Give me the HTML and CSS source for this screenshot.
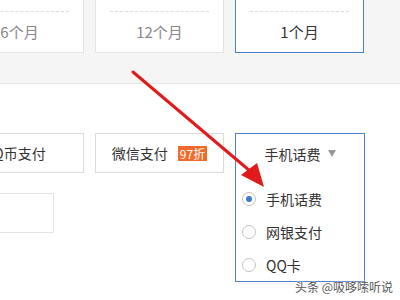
FILE: index.html
```html
<!DOCTYPE html>
<html lang="zh">
<head>
<meta charset="utf-8">
<link rel="stylesheet" href="styles.css">
</head>
<body>
<div class="page">
  <section class="plans">
    <div class="card"><div class="card-top"></div><div class="card-label">6个月</div></div>
    <div class="card"><div class="card-top"></div><div class="card-label">12个月</div></div>
    <div class="card selected"><div class="card-top"></div><div class="card-label">1个月</div></div>
  </section>
  <section class="pay">
    <div class="col-left">
      <div class="btn">Q币支付</div>
      <div class="input"></div>
    </div>
    <div class="btn wx">微信支付<span class="badge">97折</span></div>
    <div class="dropdown">
      <div class="dd-head">手机话费<span class="caret"></span></div>
      <ul class="dd-list">
        <li><span class="radio on"></span>手机话费</li>
        <li><span class="radio"></span>网银支付</li>
        <li><span class="radio"></span>QQ卡</li>
      </ul>
    </div>
  </section>
  <svg class="arrow" width="400" height="300" viewBox="0 0 400 300">
    <line x1="133" y1="72" x2="250" y2="171" stroke="#e11b1b" stroke-width="3" stroke-linecap="round"/>
    <polygon points="264,187 241,175 257,163" fill="#e11b1b"/>
  </svg>
  <div class="watermark">头条 @吸哆嗦听说</div>
</div>
</body>
</html>
```
FILE: styles.css
```css
html, body {
  margin: 0;
  padding: 0;
}
body {
  width: 400px;
  height: 300px;
  overflow: hidden;
  background: #fff;
  font-family: "Noto Sans CJK SC", "Microsoft YaHei", sans-serif;
  color: #333;
}
.page {
  position: relative;
  width: 400px;
  height: 300px;
  overflow: hidden;
}
.plans {
  height: 83px;
  background: #f5f5f5;
  border-bottom: 1px solid #e6e6e6;
  display: flex;
  align-items: flex-end;
  gap: 11px;
  margin-left: -45px;
  padding-bottom: 30px;
  box-sizing: border-box;
  height: 84px;
}
.card {
  flex: none;
  width: 129px;
  height: 93px;
  box-sizing: border-box;
  background: #fff;
  border: 1px solid #e4e4e4;
}
.card.selected {
  border-color: #4a7fcf;
}
.card-top {
  height: 50px;
  margin: 0 14px;
  border-bottom: 1px dashed #dcdcdc;
}
.card-label {
  height: 40px;
  line-height: 40px;
  text-align: center;
  font-size: 15px;
  color: #888;
}
.card.selected .card-label {
  color: #333;
}
.pay {
  display: flex;
  align-items: flex-start;
  gap: 11px;
  margin-left: -45px;
  padding-top: 49px;
}
.col-left {
  display: flex;
  flex-direction: column;
}
.btn {
  flex: none;
  width: 129px;
  height: 40px;
  box-sizing: border-box;
  border: 1px solid #dcdcdc;
  display: flex;
  align-items: center;
  justify-content: center;
  font-size: 14px;
  color: #333;
}
.wx {
  gap: 10px;
}
.badge {
  background: #f06a2a;
  color: #fff;
  font-size: 12px;
  height: 15px;
  line-height: 15px;
  padding: 0 2px;
}
.input {
  margin-top: 20px;
  width: 99px;
  height: 40px;
  box-sizing: border-box;
  border: 1px solid #e3e3e3;
}
.dropdown {
  flex: none;
  width: 130px;
  height: 149px;
  box-sizing: border-box;
  border: 1px solid #4d82cf;
}
.dd-head {
  height: 39px;
  display: flex;
  align-items: center;
  justify-content: center;
  gap: 7px;
  font-size: 14px;
  color: #333;
}
.caret {
  width: 0;
  height: 0;
  border-left: 4px solid transparent;
  border-right: 4px solid transparent;
  border-top: 7px solid #999;
}
.dd-list {
  list-style: none;
  margin: 0;
  padding: 9px 0 0 6px;
}
.dd-list li {
  height: 33px;
  display: flex;
  align-items: center;
  font-size: 14px;
  color: #333;
}
.radio {
  width: 14px;
  height: 14px;
  box-sizing: border-box;
  border: 1px solid #c4c4c4;
  border-radius: 50%;
  margin-right: 10px;
  display: flex;
  align-items: center;
  justify-content: center;
}
.radio.on::after {
  content: "";
  width: 6px;
  height: 6px;
  border-radius: 50%;
  background: #3d78d4;
}
.arrow {
  position: absolute;
  left: 0;
  top: 0;
}
.watermark {
  position: absolute;
  right: 7px;
  bottom: 5px;
  font-size: 12px;
  color: #555;
  text-shadow: 0 0 2px #fff, 0 0 1px #fff;
}
```
